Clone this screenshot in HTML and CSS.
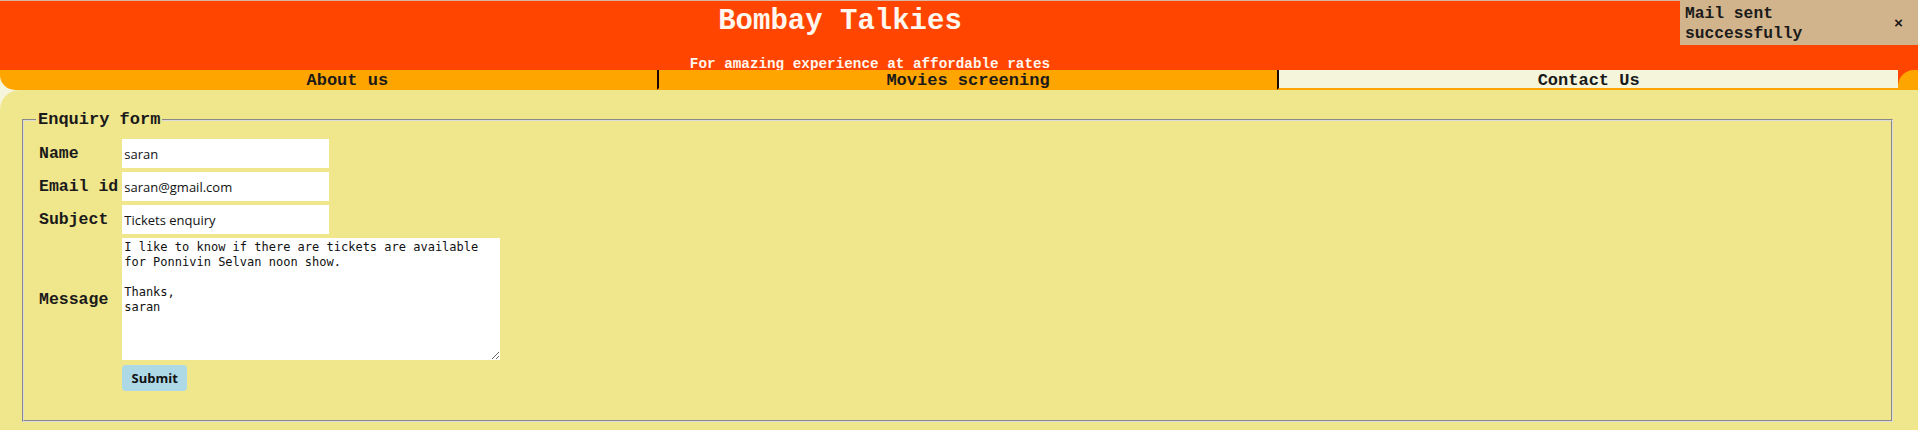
FILE: index.html
```html
<!DOCTYPE html>
<html lang="en">
<head>
<meta charset="utf-8">
<title>Bombay Talkies</title>
<link rel="stylesheet" href="styles.css">
</head>
<body>
<header class="site-header">
  <div class="brand">
    <h1 class="brand-title">Bombay Talkies</h1>
    <p class="brand-tagline">For amazing experience at affordable rates</p>
  </div>
  <div class="toast">
    <span class="toast-text">Mail sent successfully</span>
    <button class="toast-close" type="button">×</button>
  </div>
</header>
<nav class="tabs">
  <ul class="tab-list">
    <li class="tab">About us</li>
    <li class="tab tab-sep">Movies screening</li>
    <li class="tab tab-sep tab-active">Contact Us</li>
  </ul>
  <span class="tab-end"></span>
</nav>
<main class="content">
  <form class="enquiry">
    <fieldset class="enquiry-set">
      <legend class="enquiry-legend">Enquiry form</legend>
      <table class="enquiry-table">
        <tr>
          <td class="field-label">Name</td>
          <td><input class="field-input" type="text" value="saran"></td>
        </tr>
        <tr>
          <td class="field-label">Email id</td>
          <td><input class="field-input" type="text" value="saran@gmail.com"></td>
        </tr>
        <tr>
          <td class="field-label">Subject</td>
          <td><input class="field-input" type="text" value="Tickets enquiry"></td>
        </tr>
        <tr>
          <td class="field-label">Message</td>
          <td><textarea class="field-area">I like to know if there are tickets are available
for Ponnivin Selvan noon show.

Thanks,
saran</textarea></td>
        </tr>
        <tr>
          <td></td>
          <td><button class="submit-btn" type="button">Submit</button></td>
        </tr>
      </table>
    </fieldset>
  </form>
</main>
</body>
</html>
```
FILE: styles.css
```css
html, body {
  margin: 0;
  padding: 0;
}

body {
  background: #f5f5dc;
  font-family: "Liberation Mono", "Courier New", monospace;
  color: #1a1a1a;
}

.site-header {
  display: flex;
  align-items: flex-start;
  height: 70px;
  box-sizing: border-box;
  background: #ff4500;
  border-top: 1px solid #d9b6a4;
}

.brand {
  flex: 1;
  text-align: center;
  color: #fff6ee;
}

.brand-title {
  margin: 4px 0 0 0;
  font-size: 29px;
  line-height: 33px;
  font-weight: bold;
}

.brand-tagline {
  margin: 19px 0 0 0;
  padding-left: 60px;
  font-size: 14.3px;
  line-height: 14px;
  font-weight: bold;
}

.toast {
  width: 238px;
  height: 45px;
  margin-top: -1px;
  box-sizing: border-box;
  background: #d2b48c;
  display: flex;
  align-items: center;
  justify-content: space-between;
  padding: 4px 15px 1px 5px;
  color: #1a1a1a;
}

.toast-text {
  width: 140px;
  font-size: 16.3px;
  line-height: 20px;
  font-weight: bold;
}

.toast-close {
  border: none;
  background: transparent;
  padding: 0;
  font-family: "Liberation Mono", monospace;
  font-size: 15px;
  font-weight: bold;
  color: #1a1a1a;
  margin-top: 0;
}

.tabs {
  display: flex;
  background: linear-gradient(to right, #f5f5dc 50%, #ff4500 50%);
}

.tab-list {
  flex: 1;
  display: flex;
  margin: 0;
  padding: 0 0 0 38px;
  list-style: none;
  background: #ffa500;
  border-bottom-left-radius: 15px;
}

.tab {
  flex: 1;
  text-align: center;
  font-size: 17px;
  font-weight: bold;
  line-height: 14px;
  padding-top: 4px;
  border-bottom: 2px solid #ffa500;
}

.tab-sep {
  border-left: 2px solid #1a0800;
}

.tab-active {
  background: #f5f5dc;
}

.tab-end {
  width: 20px;
  background: #ffa500;
  border-top-left-radius: 16px;
}

.content {
  background: #f0e68c;
  border-top-left-radius: 20px;
  padding: 20px 23px 20px 20px;
}

.enquiry {
  margin: 0;
}

.enquiry-set {
  margin: 0 2px;
  padding: 7px 0.75em 26px;
  border: 2px groove #dcdcdc;
}

.enquiry-legend {
  padding: 0 2px;
  font-size: 17px;
  font-weight: bold;
}

.enquiry-table {
  border-spacing: 2px;
}

.enquiry-table td {
  padding: 1px;
}

.field-label {
  font-size: 16.5px;
  font-weight: bold;
  white-space: nowrap;
  vertical-align: middle;
}

.field-input {
  display: block;
  width: 207px;
  height: 29px;
  box-sizing: border-box;
  border: none;
  padding: 0 2px;
  background: #fff;
  font-family: "Open Sans", sans-serif;
  font-size: 13px;
  color: #111;
}

.field-area {
  display: block;
  width: 378px;
  height: 122px;
  box-sizing: border-box;
  border: none;
  padding: 2px;
  background: #fff;
  font-family: "DejaVu Sans Mono", monospace;
  font-size: 12px;
  line-height: 15px;
  color: #111;
  margin-bottom: 1px;
}

.submit-btn {
  display: block;
  width: 65px;
  height: 26px;
  border: none;
  border-radius: 4px;
  background: #add8e6;
  font-family: "Open Sans", sans-serif;
  font-size: 13px;
  font-weight: bold;
  color: #111;
  padding: 0;
}
```
